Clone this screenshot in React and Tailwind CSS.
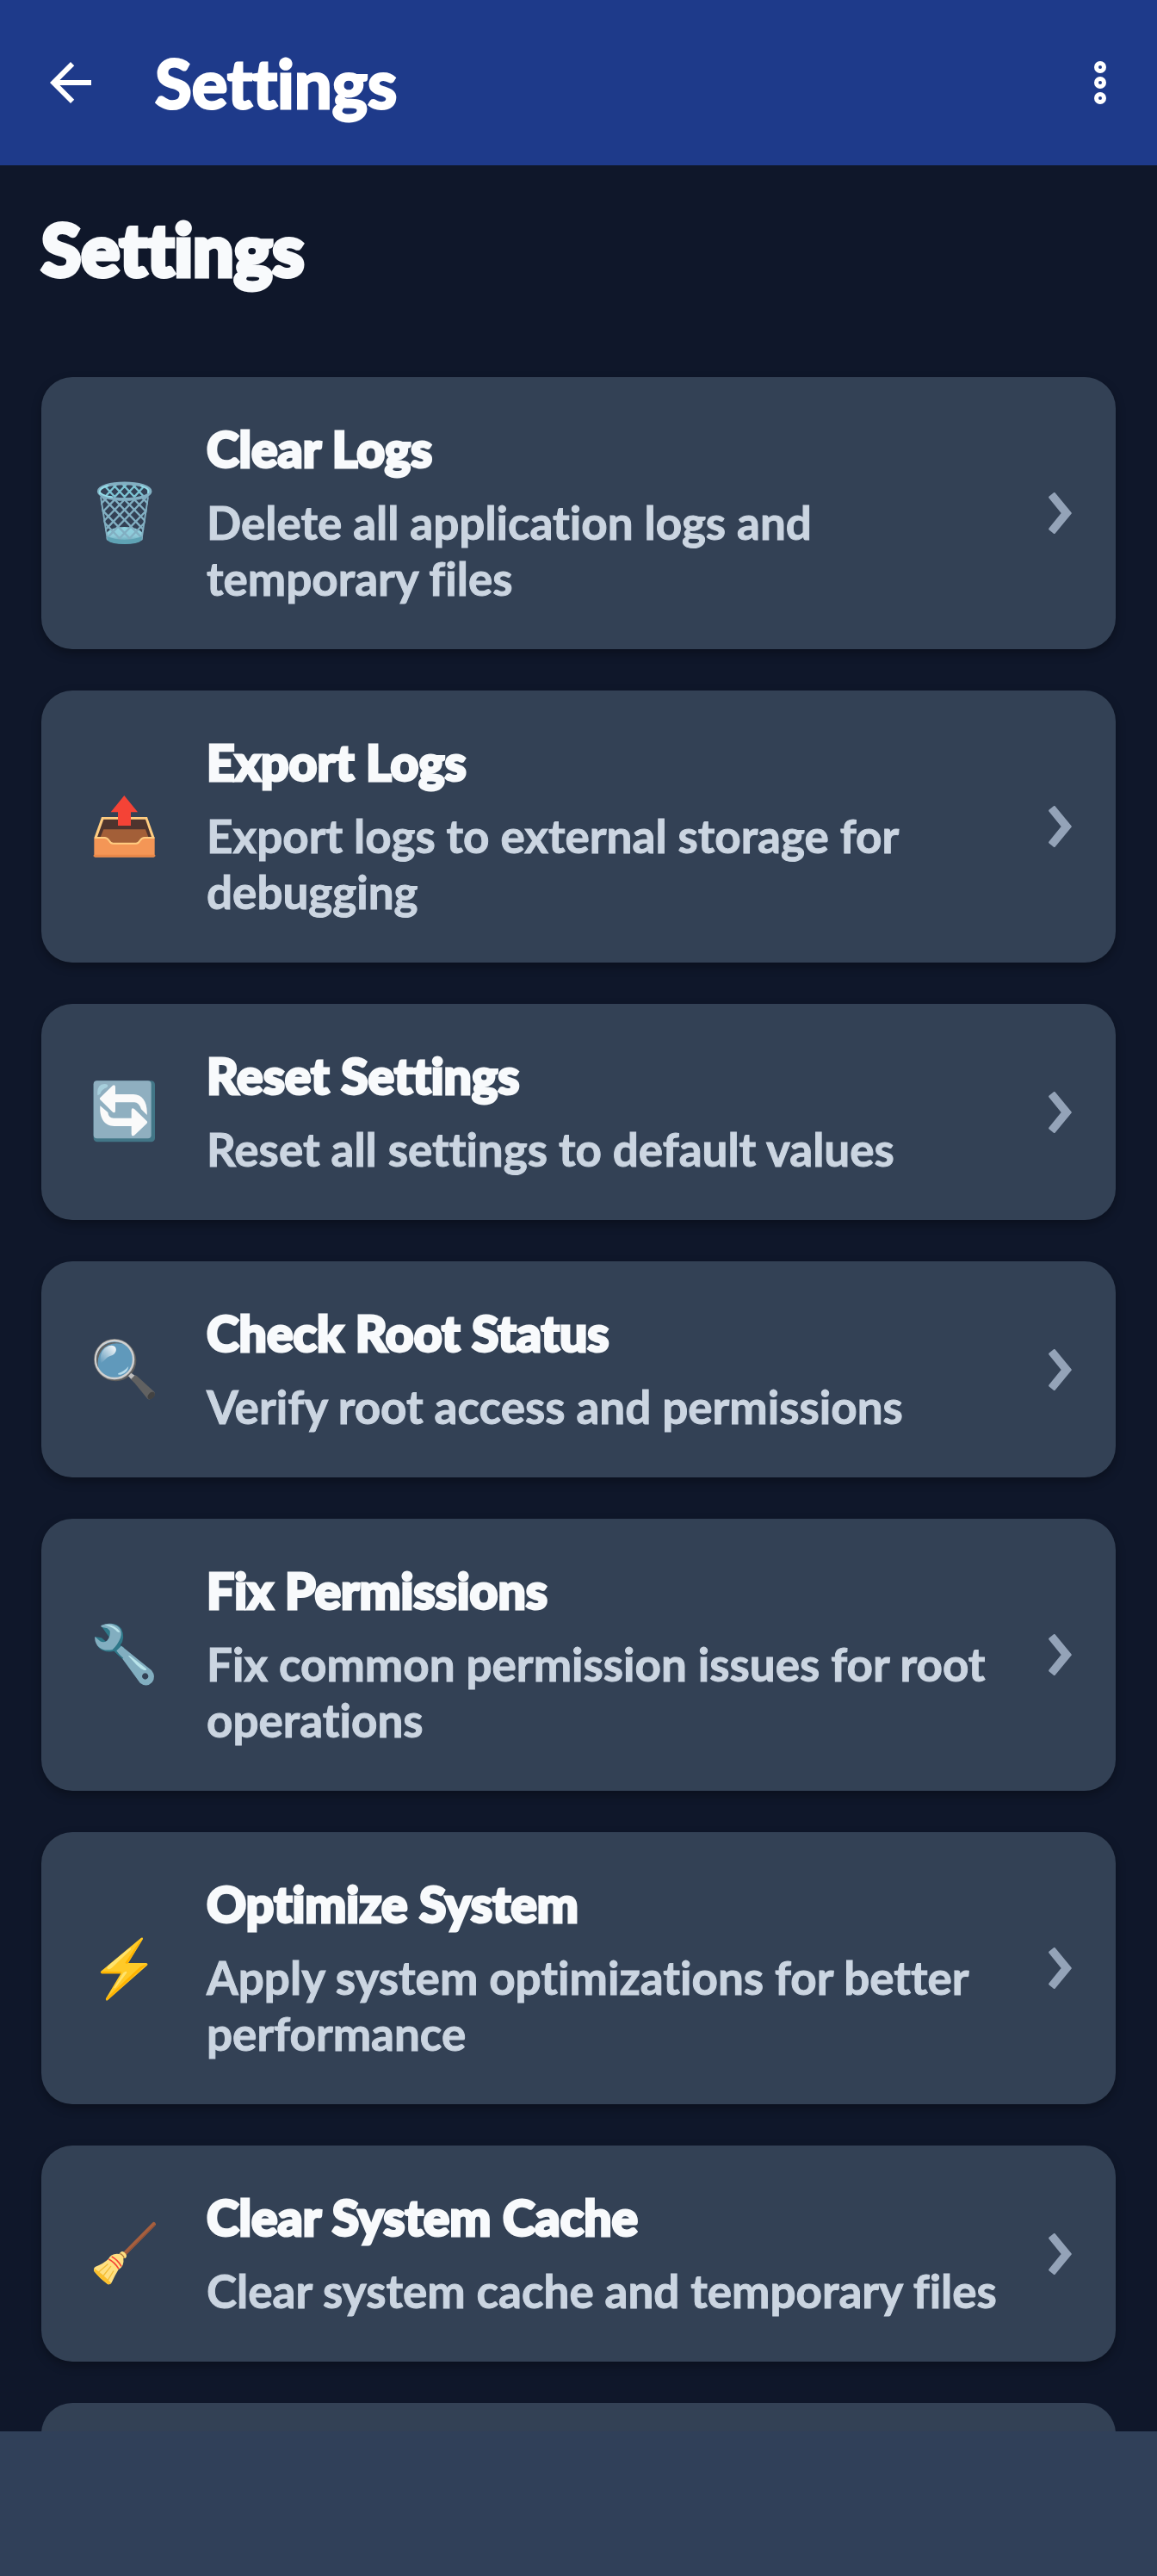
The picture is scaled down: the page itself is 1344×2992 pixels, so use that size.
import React from 'react';

const TrashIcon = () => (
  <svg viewBox="54 60 216 216" className="size-[72px] overflow-visible" aria-hidden="true">
    <defs>
      <linearGradient id="binBase" x1="0" y1="0" x2="0" y2="1">
        <stop offset="0" stopColor="#8fd3e0" />
        <stop offset="0.55" stopColor="#8ec9d8" />
        <stop offset="1" stopColor="#4f93a5" />
      </linearGradient>
      <clipPath id="binBody">
        <path d="M77 104 Q163 142 250 104 L226 262 Q164 286 102 262 Z" />
      </clipPath>
      <clipPath id="binMouth">
        <ellipse cx="164" cy="92" rx="84" ry="25" />
      </clipPath>
    </defs>
    <path d="M102 236 Q120 216 164 216 Q208 216 226 236 L224 262 Q208 275 164 275 Q120 275 104 262 Z" fill="url(#binBase)" />
    <g clipPath="url(#binBody)" stroke="#82afc2" strokeWidth="7" fill="none">
      <path d="M60 130 L200 275 M74 98 L232 262 M108 98 L240 236 M142 98 L250 210 M176 98 L256 180 M210 98 L256 146 M64 170 L160 270" />
      <path d="M268 130 L128 275 M254 98 L96 262 M220 98 L88 236 M186 98 L78 210 M152 98 L72 180 M118 98 L72 146 M264 170 L168 270" />
      <path d="M80 112 L104 264 M247 112 L224 264" strokeWidth="8" />
    </g>
    <g clipPath="url(#binMouth)" stroke="#7cc3d3" strokeWidth="7">
      <path d="M88 66 L140 122 M122 66 L174 122 M156 66 L208 122 M190 66 L242 122 M138 66 L86 122 M172 66 L120 122 M206 66 L154 122 M240 66 L188 122" />
    </g>
    <path d="M103 250 Q164 272 225 250 L223 263 Q208 276 164 276 Q120 276 105 263 Z" fill="#5fa2b4" />
    <ellipse cx="164" cy="92" rx="90" ry="28" fill="none" stroke="#82afc2" strokeWidth="11" />
    <path d="M78 100 Q72 82 106 73 M120 112 Q90 108 80 98 M222 73 Q252 82 246 96" fill="none" stroke="#94dce8" strokeWidth="6" strokeLinecap="round" />
  </svg>
);

const OutboxIcon = () => (
  <svg viewBox="54 57 216 216" className="size-[72px] overflow-visible" aria-hidden="true">
    <path d="M84 132 H243 L269 205 H58 Z" fill="#ffcc80" />
    <path d="M91 140 H237 L258 202 H69 Z" fill="#4e342e" />
    <path d="M91 175 H237 L247 202 L210 222 H117 L80 202 Z" fill="#a35f38" />
    <path d="M58 203 H94 C104 203 107 209 111 215 Q116 224 124 224 H204 Q212 224 217 215 C221 209 224 203 234 203 H269 V268 Q269 272 265 272 H62 Q58 272 58 268 Z" fill="#f49656" />
    <path d="M60 204 H94 C104 204 107 209 111 215 Q116 224 124 224 H204 Q212 224 217 215 C221 209 224 204 234 204 H268" fill="none" stroke="#ffcc80" strokeWidth="6" />
    <path d="M59 267 H268" stroke="#e98849" strokeWidth="7" strokeLinecap="round" />
    <path d="M163 57 L210 115 H186 V162 H141 V115 H116 Z" fill="#f44336" />
  </svg>
);

const ResetIcon = () => (
  <svg viewBox="54 62 216 216" className="size-[72px] overflow-visible" aria-hidden="true">
    <rect x="56" y="60" width="214" height="213" rx="13" fill="#427687" />
    <rect x="56" y="60" width="201" height="201" rx="12" fill="#8fafc0" />
    <path d="M70 110 Q66 73 94 71 Q111 72 103 83 Q84 89 79 106 Q71 111 70 110 Z" fill="#a7cfdc" />
    <g fill="#fafafa">
      <path d="M79 119 L123 76 Q132 71 132 82 V107 H195 C227 107 245 136 242 179 L222 159 Q214 135 198 135 H132 V163 Q132 175 123 169 L79 126 Q76 122 79 119 Z" />
      <path d="M242 201 L198 158 Q188 152 188 163 V190 H126 Q108 190 106 170 L79 147 C76 190 94 218 128 218 H188 V244 Q188 256 198 250 L242 208 Q245 204 242 201 Z" />
    </g>
  </svg>
);

const SearchIcon = () => (
  <svg viewBox="54 58 216 216" className="size-[72px] overflow-visible" aria-hidden="true">
    <defs>
      <linearGradient id="lensShine" x1="1" y1="0" x2="0" y2="1">
        <stop offset="0" stopColor="#ffffff" />
        <stop offset="1" stopColor="#6099bb" />
      </linearGradient>
    </defs>
    <circle cx="133" cy="134" r="72" fill="#5c5c5c" />
    <circle cx="129" cy="130" r="72" fill="#757575" />
    <circle cx="129" cy="130" r="66" fill="#6099bb" stroke="#d0d0d0" strokeWidth="7" />
    <path d="M73 160 Q54 116 86 85 Q118 60 158 76 Q110 66 85 98 Q65 126 73 160 Z" fill="#616161" />
    <path d="M81 143 C75 112 91 82 119 81 C140 83 139 105 122 115 C98 122 94 136 81 143 Z" fill="url(#lensShine)" />
    <path d="M143 178 Q162 172 178 154 Q174 178 151 183 Q136 184 143 178 Z" fill="#b8dcec" />
    <path d="M177 188 L187 177 L200 186 L188 200 Z" fill="#bdbdbd" />
    <path d="M186 199 L201 184 Q207 187 214 194 L268 243 Q273 252 263 263 Q252 273 244 267 L200 213 Q192 205 186 199 Z" fill="#616161" />
    <ellipse cx="257" cy="256" rx="15" ry="10" transform="rotate(-45 257 256)" fill="#424242" />
  </svg>
);

const WrenchIcon = () => (
  <svg viewBox="54 63 216 216" className="size-[72px] overflow-visible" aria-hidden="true">
    <path d="M82 70 Q130 50 153 80 Q168 112 149 138 L163 146 L148 178 L128 158 Q96 166 74 146 L61 108 L84 112 L99 125 L112 112 Z" fill="#2f7889" />
    <path d="M82 69 Q120 53 145 76 Q157 91 150 112 Q140 137 122 153 Q90 160 70 140 Q58 122 61 108 L79 124 Q91 130 103 122 Q116 108 113 88 L104 79 L83 74 Z" fill="#82aec0" />
    <path fillRule="evenodd" d="M136 157 L153 140 L258 225 Q275 247 260 267 Q241 287 218 269 Z M236 235 a11 11 0 1 0 0.1 0 Z" fill="#82aec0" />
    <path d="M177 175 Q180 172 190 180 L239 219 Q244 226 232 225 Q220 220 206 206 Z" fill="#b9e4ea" />
    <path d="M95 68 Q127 62 148 91 Q143 98 132 84 Q118 72 95 68 Z" fill="#b9e4ea" />
    <path d="M131 159 L158 184" stroke="#2f7889" strokeWidth="4" />
  </svg>
);

const BoltIcon = () => (
  <svg viewBox="54 60 216 216" className="size-[72px] overflow-visible" aria-hidden="true">
    <path d="M222 62 Q229 59 228 67 L177 150 H240 Q248 153 242 159 L105 280 Q97 283 99 274 L151 187 H85 Q77 184 83 178 Z" fill="#ffca28" />
    <path d="M228 64 L174 153 L166 150 L214 78 Z M243 153 L104 280 L99 279 L101 272 L220 162 Z M81 181 L90 179 L154 181 L152 187 H84 Z" fill="#ffb300" />
    <path d="M104 169 Q100 165 110 157 L177 101 Q192 94 184 105 L125 162 Q109 177 104 169 Z M160 184 Q172 174 172 184 L134 235 Q126 242 128 235 Z" fill="#ffe36c" />
  </svg>
);

const BroomIcon = () => (
  <svg viewBox="54 64 216 216" className="size-[72px] overflow-visible" aria-hidden="true">
    <path d="M165 170 L266 68" stroke="#a65f3e" strokeWidth="14" strokeLinecap="round" />
    <path d="M171 169 L270 70" stroke="#8d4c33" strokeWidth="3" />
    <path d="M150 166 Q158 158 168 171 Q175 181 166 187 L160 187 Q164 215 143 226 Q130 247 119 272 Q111 281 104 276 Q77 256 58 232 Q54 222 63 216 Q92 205 107 190 Q119 168 145 172 Z" fill="#ffe082" />
    <path d="M58 222 Q85 238 118 274 Q111 281 104 276 Q76 256 58 232 Z" fill="#fbc02d" />
    <path d="M74 235 L105 208 M91 247 L116 215 M106 263 L125 232" stroke="#f2bd38" strokeWidth="4" strokeLinecap="round" />
    <path d="M119 181 Q140 192 153 215 M109 190 Q130 201 144 224" fill="none" stroke="#f44336" strokeWidth="5" />
    <path d="M148 171 Q157 173 163 186" fill="none" stroke="#b0763c" strokeWidth="4" />
  </svg>
);

const settings = [
  { icon: <TrashIcon />, title: 'Clear Logs', desc: 'Delete all application logs and temporary files' },
  { icon: <OutboxIcon />, title: 'Export Logs', desc: 'Export logs to external storage for debugging' },
  { icon: <ResetIcon />, title: 'Reset Settings', desc: 'Reset all settings to default values' },
  { icon: <SearchIcon />, title: 'Check Root Status', desc: 'Verify root access and permissions' },
  { icon: <WrenchIcon />, title: 'Fix Permissions', desc: 'Fix common permission issues for root operations' },
  { icon: <BoltIcon />, title: 'Optimize System', desc: 'Apply system optimizations for better performance' },
  { icon: <BroomIcon />, title: 'Clear System Cache', desc: 'Clear system cache and temporary files' },
];

const SettingCard = ({ icon, title, desc }) => (
  <button
    type="button"
    className="flex w-full items-center rounded-[36px] bg-[#334155] pr-[51px] pl-[60px] text-left shadow-[0_5px_12px_rgba(0,0,0,0.3)]"
  >
    <span className="mr-[60px] shrink-0">{icon}</span>
    <span className="min-w-0 flex-1 pt-[46px] pb-[50px]">
      <span className="block text-[57px] leading-[74px] font-black text-slate-50 [-webkit-text-stroke:3px]">{title}</span>
      <span className="mt-4 block text-[53px] leading-[65px] font-bold text-[#cbd5e1] [-webkit-text-stroke:1px]">{desc}</span>
    </span>
    <svg viewBox="0 0 81 146" className="ml-6 h-12 w-[27px] shrink-0" aria-hidden="true">
      <path
        d="M4 17 L20 4 L77 73 L20 142 L4 129 L49 73 Z"
        fill="#94a3b8"
        stroke="#94a3b8"
        strokeWidth="8"
        strokeLinejoin="round"
      />
    </svg>
  </button>
);

export default function App() {
  return (
    <div className="flex h-screen flex-col bg-[#0f172a] font-['Lato',sans-serif] [font-variant-ligatures:none]">
      <header className="flex h-48 shrink-0 items-center bg-[#1e3a8a] px-[46px] text-white">
        <button type="button" aria-label="Back" className="mr-[62px]">
          <svg viewBox="0 0 24 24" className="size-[72px]" fill="currentColor" aria-hidden="true">
            <path d="M20 11H7.83l5.59-5.59L12 4l-8 8 8 8 1.41-1.41L7.83 13H20v-2z" />
          </svg>
        </button>
        <span className="flex-1 text-[78px] leading-[96px] font-bold [-webkit-text-stroke:3px]">Settings</span>
        <button type="button" aria-label="More options" className="-mr-4">
          <svg viewBox="0 0 72 72" className="size-[72px]" fill="none" stroke="currentColor" strokeWidth="5" aria-hidden="true">
            <circle cx="36" cy="18" r="4.5" />
            <circle cx="36" cy="36" r="4.5" />
            <circle cx="36" cy="54" r="4.5" />
          </svg>
        </button>
      </header>

      <main className="min-h-0 flex-1 overflow-y-auto px-12 pt-[46px] [scrollbar-width:none]">
        <h1 className="mb-[98px] text-[84px] leading-[102px] font-black text-slate-50 [-webkit-text-stroke:5px]">Settings</h1>
        <div className="flex flex-col gap-12">
          {settings.map((item) => (
            <SettingCard key={item.title} {...item} />
          ))}
          <div className="h-[251px] rounded-[36px] bg-[#334155]"></div>
        </div>
      </main>

      <footer className="h-[168px] shrink-0 bg-[#304059]"></footer>
    </div>
  );
}
